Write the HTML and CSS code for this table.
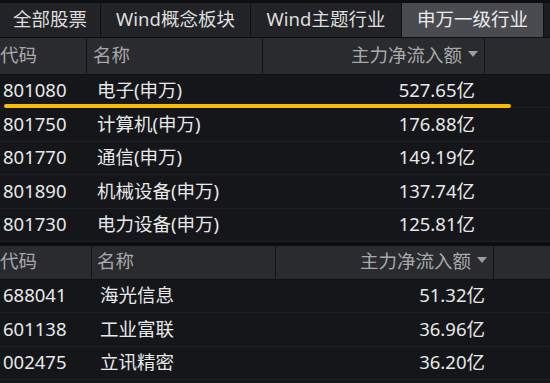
FILE: index.html
```html
<!DOCTYPE html>
<html lang="zh-CN">
<head>
<meta charset="utf-8">
<title>申万一级行业 主力净流入</title>
<link rel="stylesheet" href="styles.css">
</head>
<body>
<div class="screen">
  <div class="tabs">
    <div class="tab t1">全部股票</div>
    <div class="tab t2">Wind概念板块</div>
    <div class="tab t3">Wind主题行业</div>
    <div class="tab t4 active">申万一级行业</div>
    <div class="tab rest"></div>
  </div>

  <div class="table top">
    <div class="thead">
      <div class="th code">代码</div>
      <div class="th name">名称</div>
      <div class="th val">主力净流入额<span class="caret"></span></div>
      <div class="th rest"></div>
    </div>
    <div class="row first">
      <div class="td code">801080</div>
      <div class="td name">电子(申万)</div>
      <div class="td val">527.65亿</div>
      <div class="highlight"></div>
    </div>
    <div class="row">
      <div class="td code">801750</div>
      <div class="td name">计算机(申万)</div>
      <div class="td val">176.88亿</div>
    </div>
    <div class="row">
      <div class="td code">801770</div>
      <div class="td name">通信(申万)</div>
      <div class="td val">149.19亿</div>
    </div>
    <div class="row">
      <div class="td code">801890</div>
      <div class="td name">机械设备(申万)</div>
      <div class="td val">137.74亿</div>
    </div>
    <div class="row">
      <div class="td code">801730</div>
      <div class="td name">电力设备(申万)</div>
      <div class="td val">125.81亿</div>
    </div>
  </div>

  <div class="table bottom">
    <div class="thead">
      <div class="th code">代码</div>
      <div class="th name">名称</div>
      <div class="th val">主力净流入额<span class="caret"></span></div>
      <div class="th rest"></div>
    </div>
    <div class="row">
      <div class="td code">688041</div>
      <div class="td name">海光信息</div>
      <div class="td val">51.32亿</div>
    </div>
    <div class="row">
      <div class="td code">601138</div>
      <div class="td name">工业富联</div>
      <div class="td val">36.96亿</div>
    </div>
    <div class="row">
      <div class="td code">002475</div>
      <div class="td name">立讯精密</div>
      <div class="td val">36.20亿</div>
    </div>
    <div class="row"></div>
  </div>
</div>
</body>
</html>
```
FILE: styles.css
```css
html, body {
  margin: 0;
  padding: 0;
  background: #0c0d0f;
}
body {
  width: 550px;
  height: 383px;
  overflow: hidden;
  font-family: "Noto Sans", "Noto Sans CJK SC", sans-serif;
  font-size: 18.5px;
  color: #e8e8e8;
}
.screen {
  width: 550px;
  height: 383px;
  overflow: hidden;
  display: flex;
  flex-direction: column;
}

/* tabs */
.tabs {
  display: flex;
  gap: 1px;
  height: 34px;
  padding-top: 3px;
  background: #0d0e10;
  border-bottom: 1px solid #0d0e10;
  flex: none;
}
.tab {
  display: flex;
  align-items: center;
  justify-content: center;
  background: #222327;
  color: #dedede;
  line-height: 1;
  padding-bottom: 2px;
  box-sizing: border-box;
}
.tab.t1 { width: 100px; }
.tab.t2 { width: 149px; }
.tab.t3 { width: 150px; }
.tab.t4 { width: 141px; }
.tab.rest { flex: 1; background: #1b1c1f; }
.tab.active {
  background: #4a4b51;
  color: #ececec;
}

/* tables */
.table {
  flex: none;
  display: flex;
  flex-direction: column;
  background: #14161a;
}
.thead {
  display: grid;
  background: #2a2b2f;
  border-bottom: 1px solid #0f1012;
  box-sizing: border-box;
}
.th {
  display: flex;
  align-items: center;
  color: #a9a9ab;
  line-height: 1;
  border-right: 1px solid #121316;
  box-sizing: border-box;
  padding-bottom: 2px;
}
.th.code { padding-left: 0; }
.th.val { justify-content: flex-end; }
.th.rest { border-right: 0; }
.caret {
  display: inline-block;
  width: 0;
  height: 0;
  border-left: 5px solid transparent;
  border-right: 5px solid transparent;
  border-top: 6px solid #9c9ca0;
  margin-left: 6px;
  margin-bottom: 3px;
}

.row {
  position: relative;
  display: grid;
  border-bottom: 1px solid #1e2025;
  box-sizing: border-box;
  background: #14161a;
}
.td {
  display: flex;
  align-items: center;
  line-height: 1;
  padding-bottom: 1px;
}
.td.code { padding-left: 3px; }
.td.val { justify-content: flex-end; }

.highlight {
  position: absolute;
  left: 4px;
  width: 507px;
  top: 29px;
  height: 4px;
  border-radius: 2px;
  background: #f7bd00;
}

/* top table geometry */
.top .thead {
  height: 37px;
  grid-template-columns: 87px 176px 222px 1fr;
}
.top .thead .th.name { padding-left: 6px; }
.top .thead .th.val { padding-right: 6px; }
.top .row {
  height: 33.4px;
  grid-template-columns: 94px 200px 181px 1fr;
}
.top .row .td.name { padding-left: 3px; }

/* bottom table geometry */
.bottom {
  margin-top: 4px;
}
.bottom .thead {
  height: 34px;
  grid-template-columns: 92px 184px 218px 1fr;
}
.bottom .thead .th.name { padding-left: 5px; }
.bottom .thead .th.val { padding-right: 6px; }
.bottom .row {
  height: 33.5px;
  grid-template-columns: 97px 200px 188px 1fr;
}
.bottom .row .td.name { padding-left: 3px; }
```
